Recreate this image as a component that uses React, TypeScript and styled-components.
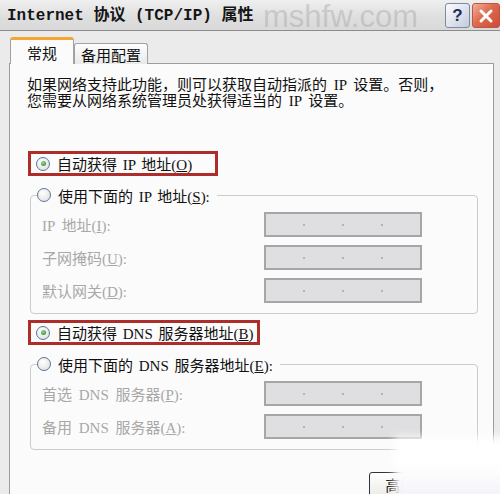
import React from 'react';
import styled, { createGlobalStyle } from 'styled-components';

const GlobalStyle = createGlobalStyle`
  html, body {
    margin: 0;
    padding: 0;
    background: #e8e8e8;
  }
  body {
    width: 500px;
    height: 494px;
    overflow: hidden;
    font-family: "Liberation Serif", "Noto Sans CJK SC", serif;
  }
`;

const Window = styled.div`
  position: relative;
  width: 500px;
  height: 494px;
  overflow: hidden;
  display: flex;
  flex-direction: column;
  background: #e9e9e9;
`;

const TitleBar = styled.div`
  position: relative;
  height: 31px;
  flex: none;
  display: flex;
  align-items: flex-start;
  padding-left: 7px;
  box-sizing: border-box;
  background: linear-gradient(#efefef, #dedede 60%, #d9d9d9);
  border-bottom: 1px solid #8c8c8c;
`;

const Title = styled.div`
  margin-top: 6px;
  font-family: "Liberation Mono", "Noto Sans CJK SC", monospace;
  font-weight: bold;
  font-size: 16px;
  line-height: 20px;
  color: #151515;
  white-space: pre;
`;

const Watermark = styled.div`
  position: absolute;
  left: 263px;
  top: -1px;
  font-family: "Liberation Sans", sans-serif;
  font-size: 31px;
  color: rgba(150, 150, 150, 0.36);
  pointer-events: none;
`;

const Caption = styled.div`
  margin-left: auto;
  margin-top: 3px;
  display: flex;
  gap: 2px;
`;

const CaptionButton = styled.div<{ $close?: boolean }>`
  width: ${p => (p.$close ? 28 : 25)}px;
  height: 25px;
  box-sizing: border-box;
  border-radius: 3px;
  display: flex;
  align-items: center;
  justify-content: center;
  font-family: "Liberation Sans", sans-serif;
  font-weight: bold;
  font-size: 17px;
  color: #1f2c5c;
  border: 1px solid ${p => (p.$close ? '#b9584a' : '#7d8aa3')};
  background: ${p =>
    p.$close
      ? 'linear-gradient(135deg, #f3b09c, #de6a4e 45%, #cd4c33)'
      : 'linear-gradient(135deg, #fbfcfe, #dde2ec 55%, #c3cad8)'};
`;

const Body = styled.div`
  flex: 1;
  display: flex;
  flex-direction: column;
  padding: 6px 6px 0 9px;
  background: #ebebeb;
`;

const Tabs = styled.div`
  display: flex;
  align-items: flex-end;
  padding-left: 1px;
  margin-bottom: -1px;
  position: relative;
  z-index: 1;
`;

const Tab = styled.div<{ $active?: boolean }>`
  box-sizing: border-box;
  height: ${p => (p.$active ? 27 : 21)}px;
  padding: 0 ${p => (p.$active ? 16 : 6)}px;
  display: flex;
  align-items: center;
  justify-content: center;
  font-family: "Noto Sans CJK SC", sans-serif;
  font-size: 15px;
  color: #111;
  border: 1px solid #9ea3a6;
  border-bottom: none;
  border-radius: 3px 3px 0 0;
  background: ${p => (p.$active ? '#fbfbfb' : 'linear-gradient(#fdfdfd, #e9e9e9)')};
  border-top: ${p => (p.$active ? '3px solid #f2a634' : '1px solid #9ea3a6')};
  padding-top: ${p => (p.$active ? 0 : 1)}px;
`;

const Panel = styled.div`
  flex: 1;
  display: flex;
  flex-direction: column;
  background: #fbfbfb;
  border: 1px solid #9c9c9c;
  border-bottom: none;
  padding: 13px 14px 0 17px;
`;

const Description = styled.p`
  margin: 0;
  font-size: 15px;
  line-height: 16px;
  word-spacing: 3px;
  color: #111;
  white-space: pre-line;
`;

const Highlight = styled.div<{ $width: number; $gap: number }>`
  box-sizing: border-box;
  width: ${p => p.$width}px;
  height: 25px;
  margin: ${p => p.$gap}px 0 0 1px;
  padding-left: 5px;
  border: 3px solid #ad2d2b;
  display: flex;
  align-items: center;
`;

const Option = styled.label<{ $muted?: boolean }>`
  display: flex;
  align-items: center;
  gap: 7px;
  height: 18px;
  font-size: 15px;
  word-spacing: 2px;
  color: ${p => (p.$muted ? '#a6a6a6' : '#111')};
  white-space: nowrap;
`;

const Radio = styled.span<{ $checked?: boolean }>`
  position: relative;
  width: 14px;
  height: 14px;
  flex: none;
  box-sizing: border-box;
  border-radius: 50%;
  border: 1px solid #5b7696;
  background: radial-gradient(circle at 40% 35%, #ffffff, #e6e6e6 70%, #cfcfcf);

  &::after {
    content: '';
    display: ${p => (p.$checked ? 'block' : 'none')};
    position: absolute;
    left: 3.5px;
    top: 3.5px;
    width: 5px;
    height: 5px;
    border-radius: 50%;
    background: radial-gradient(circle at 40% 35%, #9fd79b, #3c9b3a 70%);
  }
`;

const Key = styled.span`
  text-decoration: underline;
`;

const Group = styled.fieldset`
  box-sizing: border-box;
  width: 448px;
  margin: 10px 0 0 3px;
  padding: 0;
  border: 1px solid #cbcbcb;
  border-radius: 4px;
`;

const Legend = styled.legend`
  margin-left: 6px;
  padding: 0 7px 0 0;
`;

const Fields = styled.div`
  display: grid;
  grid-template-columns: 222px 158px;
  grid-auto-rows: 25px;
  row-gap: 8px;
  align-items: center;
  padding: 8px 0 10px 11px;
`;

const FieldLabel = styled.span`
  font-size: 15px;
  word-spacing: 3px;
  color: #a8a8a8;
  white-space: nowrap;
`;

const IpBox = styled.div`
  box-sizing: border-box;
  height: 25px;
  display: flex;
  align-items: center;
  border: 2px solid #a6a6a6;
  background: #dfdfe1;
`;

const Octet = styled.span`
  flex: 1;
`;

const Dot = styled.span`
  width: 2px;
  height: 2px;
  background: #b4b4b4;
`;

const Advanced = styled.div`
  align-self: flex-end;
  width: 94px;
  height: 25px;
  margin: 22px 16px 0 0;
  box-sizing: border-box;
  border: 1px solid #2b3440;
  border-radius: 3px;
  background: linear-gradient(#ffffff, #ecebe6);
  display: flex;
  align-items: center;
  justify-content: center;
  font-family: "Noto Sans CJK SC", sans-serif;
  font-size: 15px;
  color: #111;
`;

const Haze = styled.div`
  position: absolute;
  left: 394px;
  top: 437px;
  right: -12px;
  bottom: -12px;
  background: linear-gradient(#ffffff 40%, #f1eff7);
  filter: blur(4px);
  pointer-events: none;
`;

const CloseGlyph = () => (
  <svg width="16" height="16" viewBox="0 0 16 16">
    <path d="M3 3 L13 13 M13 3 L3 13" stroke="#ffffff" strokeWidth="3" strokeLinecap="round" />
  </svg>
);

const IpField = () => (
  <IpBox>
    <Octet />
    <Dot />
    <Octet />
    <Dot />
    <Octet />
    <Dot />
    <Octet />
  </IpBox>
);

const ipRows = [
  { text: 'IP 地址(', key: 'I' },
  { text: '子网掩码(', key: 'U' },
  { text: '默认网关(', key: 'D' },
];

const dnsRows = [
  { text: '首选 DNS 服务器(', key: 'P' },
  { text: '备用 DNS 服务器(', key: 'A' },
];

const FieldRows = ({ rows }: { rows: { text: string; key: string }[] }) => (
  <Fields>
    {rows.map(r => (
      <React.Fragment key={r.key}>
        <FieldLabel>
          {r.text}
          <Key>{r.key}</Key>):
        </FieldLabel>
        <IpField />
      </React.Fragment>
    ))}
  </Fields>
);

export default function App() {
  return (
    <Window>
      <GlobalStyle />
      <TitleBar>
        <Title>Internet 协议 (TCP/IP) 属性</Title>
        <Caption>
          <CaptionButton>?</CaptionButton>
          <CaptionButton $close>
            <CloseGlyph />
          </CaptionButton>
        </Caption>
        <Watermark>mshfw.com</Watermark>
      </TitleBar>

      <Body>
        <Tabs>
          <Tab $active>常规</Tab>
          <Tab>备用配置</Tab>
        </Tabs>

        <Panel>
          <Description>
            {'如果网络支持此功能，则可以获取自动指派的 IP 设置。否则，\n您需要从网络系统管理员处获得适当的 IP 设置。'}
          </Description>

          <Highlight $width={190} $gap={42}>
            <Option>
              <Radio $checked />
              <span>
                自动获得 IP 地址(<Key>O</Key>)
              </span>
            </Option>
          </Highlight>

          <Group>
            <Legend>
              <Option>
                <Radio />
                <span>
                  使用下面的 IP 地址(<Key>S</Key>):
                </span>
              </Option>
            </Legend>
            <FieldRows rows={ipRows} />
          </Group>

          <Highlight $width={232} $gap={6}>
            <Option>
              <Radio $checked />
              <span>
                自动获得 DNS 服务器地址(<Key>B</Key>)
              </span>
            </Option>
          </Highlight>

          <Group>
            <Legend>
              <Option>
                <Radio />
                <span>
                  使用下面的 DNS 服务器地址(<Key>E</Key>):
                </span>
              </Option>
            </Legend>
            <FieldRows rows={dnsRows} />
          </Group>

          <Advanced>
            高级(<Key>V</Key>)...
          </Advanced>
        </Panel>
      </Body>

      <Haze />
    </Window>
  );
}
